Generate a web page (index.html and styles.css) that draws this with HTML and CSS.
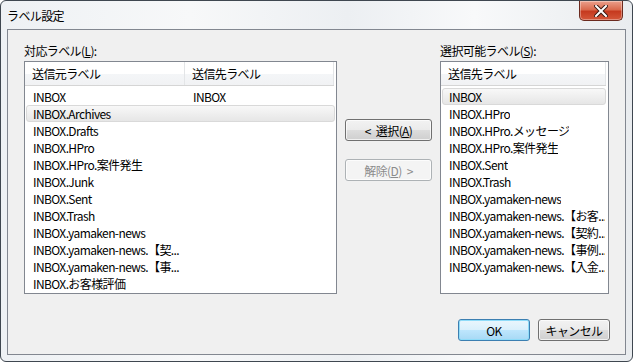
FILE: index.html
```html
<!DOCTYPE html>
<html lang="ja">
<head>
  <meta charset="UTF-8">
  <title>ラベル設定</title>
  <link rel="stylesheet" href="styles.css">
</head>
<body>
  <div class="window">
    <div class="titlebar">
      <span class="title">ラベル設定</span>
      <button class="close-btn" aria-label="閉じる">
        <svg width="14" height="12" viewBox="0 0 14 12">
          <path d="M2 1 L12 11 M12 1 L2 11" stroke="#3a1a14" stroke-width="4" stroke-linecap="square"/>
          <path d="M2 1 L12 11 M12 1 L2 11" stroke="#ffffff" stroke-width="2" stroke-linecap="square"/>
        </svg>
      </button>
    </div>

    <div class="client">
      <div class="main">
        <div class="col col-left">
          <div class="label">対応ラベル(<u>L</u>):</div>
          <div class="list list-left">
            <div class="list-head">
              <div class="cell c1">送信元ラベル</div>
              <div class="cell c2">送信先ラベル</div>
            </div>
            <div class="rows">
              <div class="row"><span class="cell c1">INBOX</span><span class="cell c2">INBOX</span></div>
              <div class="row selected"><span class="cell c1">INBOX.Archives</span></div>
              <div class="row"><span class="cell c1">INBOX.Drafts</span></div>
              <div class="row"><span class="cell c1">INBOX.HPro</span></div>
              <div class="row"><span class="cell c1">INBOX.HPro.案件発生</span></div>
              <div class="row"><span class="cell c1">INBOX.Junk</span></div>
              <div class="row"><span class="cell c1">INBOX.Sent</span></div>
              <div class="row"><span class="cell c1">INBOX.Trash</span></div>
              <div class="row"><span class="cell c1">INBOX.yamaken-news</span></div>
              <div class="row"><span class="cell c1">INBOX.yamaken-news.【契...</span></div>
              <div class="row"><span class="cell c1">INBOX.yamaken-news.【事...</span></div>
              <div class="row"><span class="cell c1">INBOX.お客様評価</span></div>
            </div>
          </div>
        </div>

        <div class="col col-mid">
          <button class="btn">&lt; 選択(<u>A</u>)</button>
          <button class="btn" disabled>解除(<u>D</u>) &gt;</button>
        </div>

        <div class="col col-right">
          <div class="label">選択可能ラベル(<u>S</u>):</div>
          <div class="list list-right">
            <div class="list-head">
              <div class="cell">送信先ラベル</div>
            </div>
            <div class="rows">
              <div class="row selected"><span class="cell">INBOX</span></div>
              <div class="row"><span class="cell">INBOX.HPro</span></div>
              <div class="row"><span class="cell">INBOX.HPro.メッセージ</span></div>
              <div class="row"><span class="cell">INBOX.HPro.案件発生</span></div>
              <div class="row"><span class="cell">INBOX.Sent</span></div>
              <div class="row"><span class="cell">INBOX.Trash</span></div>
              <div class="row"><span class="cell">INBOX.yamaken-news</span></div>
              <div class="row"><span class="cell">INBOX.yamaken-news.【お客...</span></div>
              <div class="row"><span class="cell">INBOX.yamaken-news.【契約...</span></div>
              <div class="row"><span class="cell">INBOX.yamaken-news.【事例...</span></div>
              <div class="row"><span class="cell">INBOX.yamaken-news.【入金...</span></div>
            </div>
          </div>
        </div>
      </div>

      <div class="footer">
        <button class="btn btn-ok">OK</button>
        <button class="btn btn-cancel">キャンセル</button>
      </div>
    </div>
  </div>
</body>
</html>
```

FILE: styles.css
```css
* {
  margin: 0;
  padding: 0;
  box-sizing: border-box;
}

body {
  width: 633px;
  height: 362px;
  overflow: hidden;
  background: #ffffff;
  font-family: "Noto Sans CJK JP", "Liberation Sans", sans-serif;
  font-size: 12px;
  letter-spacing: -0.6px;
  color: #000;
}

.window {
  width: 633px;
  height: 362px;
  border: 1px solid #3f4750;
  border-radius: 6px;
  background: linear-gradient(90deg, #eef1f4 0%, #f7f8f9 30%, #eceff2 55%, #f8f9fa 75%, #e9ecef 100%);
  padding: 0 6px 6px 6px;
  display: flex;
  flex-direction: column;
}

.titlebar {
  height: 28px;
  display: flex;
  justify-content: space-between;
  align-items: flex-start;
}

.title {
  margin-top: 6px;
  font-size: 12px;
  line-height: 17px;
  color: #000;
}

.close-btn {
  width: 44px;
  height: 20px;
  margin-right: 3px;
  border: 1px solid #6b2a1f;
  border-top: none;
  border-radius: 0 0 5px 5px;
  background: linear-gradient(#eba08c 0%, #da6a4e 45%, #c63a1f 55%, #d4573a 100%);
  box-shadow: inset 0 0 0 1px rgba(255,255,255,0.35);
  display: flex;
  align-items: center;
  justify-content: center;
}

.client {
  flex: 1;
  border: 1px solid #828790;
  background: #f0f0f0;
  padding: 13px 15px 12px 16px;
  display: flex;
  flex-direction: column;
}

.main {
  display: flex;
  align-items: flex-start;
}

.col {
  display: flex;
  flex-direction: column;
}

.label {
  height: 16px;
  line-height: 16px;
  margin-bottom: 2px;
}

.list {
  height: 233px;
  border: 1px solid #828790;
  background: #fff;
  overflow: hidden;
}

.list-left {
  width: 313px;
}

.list-right {
  width: 169px;
}

.list-head {
  height: 24px;
  display: flex;
  background: linear-gradient(#ffffff 0%, #ffffff 50%, #f4f6f8 51%, #f1f2f4 100%);
  border-bottom: 1px solid #d5d5d5;
  margin-right: 2px;
}

.list-head .cell {
  line-height: 23px;
  padding-left: 7px;
  border-right: 1px solid #e3e5e7;
}

.list-left .c1 {
  width: 160px;
  flex-shrink: 0;
}

.list-left .c2 {
  flex: 1;
}

.list-right .list-head .cell {
  flex: 1;
}

.rows {
  padding: 2px 1px 0 1px;
}

.row {
  height: 17px;
  display: flex;
  align-items: center;
  border: 1px solid transparent;
  border-radius: 3px;
  white-space: nowrap;
}

.row .cell {
  padding-left: 6px;
  overflow: hidden;
}

.row.selected {
  background: linear-gradient(#f8f8f8, #e6e6e6);
  border-color: #d9d9d9;
}

.list-right .row {
  margin-right: 1px;
}

.col-mid {
  margin: 76px 8px 0 8px;
  gap: 18px;
}

.btn {
  font-family: inherit;
  font-size: 12px;
  letter-spacing: inherit;
  word-spacing: 3px;
  color: #000;
  height: 22px;
  border: 1px solid #707070;
  border-radius: 3px;
  background: linear-gradient(#f2f2f2 0%, #ebebeb 49%, #dddddd 50%, #cfcfcf 100%);
  box-shadow: inset 0 0 0 1px rgba(255,255,255,0.7);
}

.col-mid .btn {
  width: 87px;
}

.btn:disabled {
  color: #8b8b8b;
  border-color: #adb2b5;
  background: #f4f4f4;
}

.footer {
  margin-top: 25px;
  display: flex;
  justify-content: flex-end;
  gap: 8px;
}

.footer .btn {
  width: 72px;
}

.btn-ok {
  border-color: #3c7fb1;
  background: linear-gradient(#eaf6fd 0%, #d9f0fc 49%, #bee6fd 50%, #a7d9f5 100%);
  box-shadow: inset 0 0 0 1px #8fdcf9;
}

u {
  text-decoration: underline;
  text-underline-offset: 1px;
}
```
